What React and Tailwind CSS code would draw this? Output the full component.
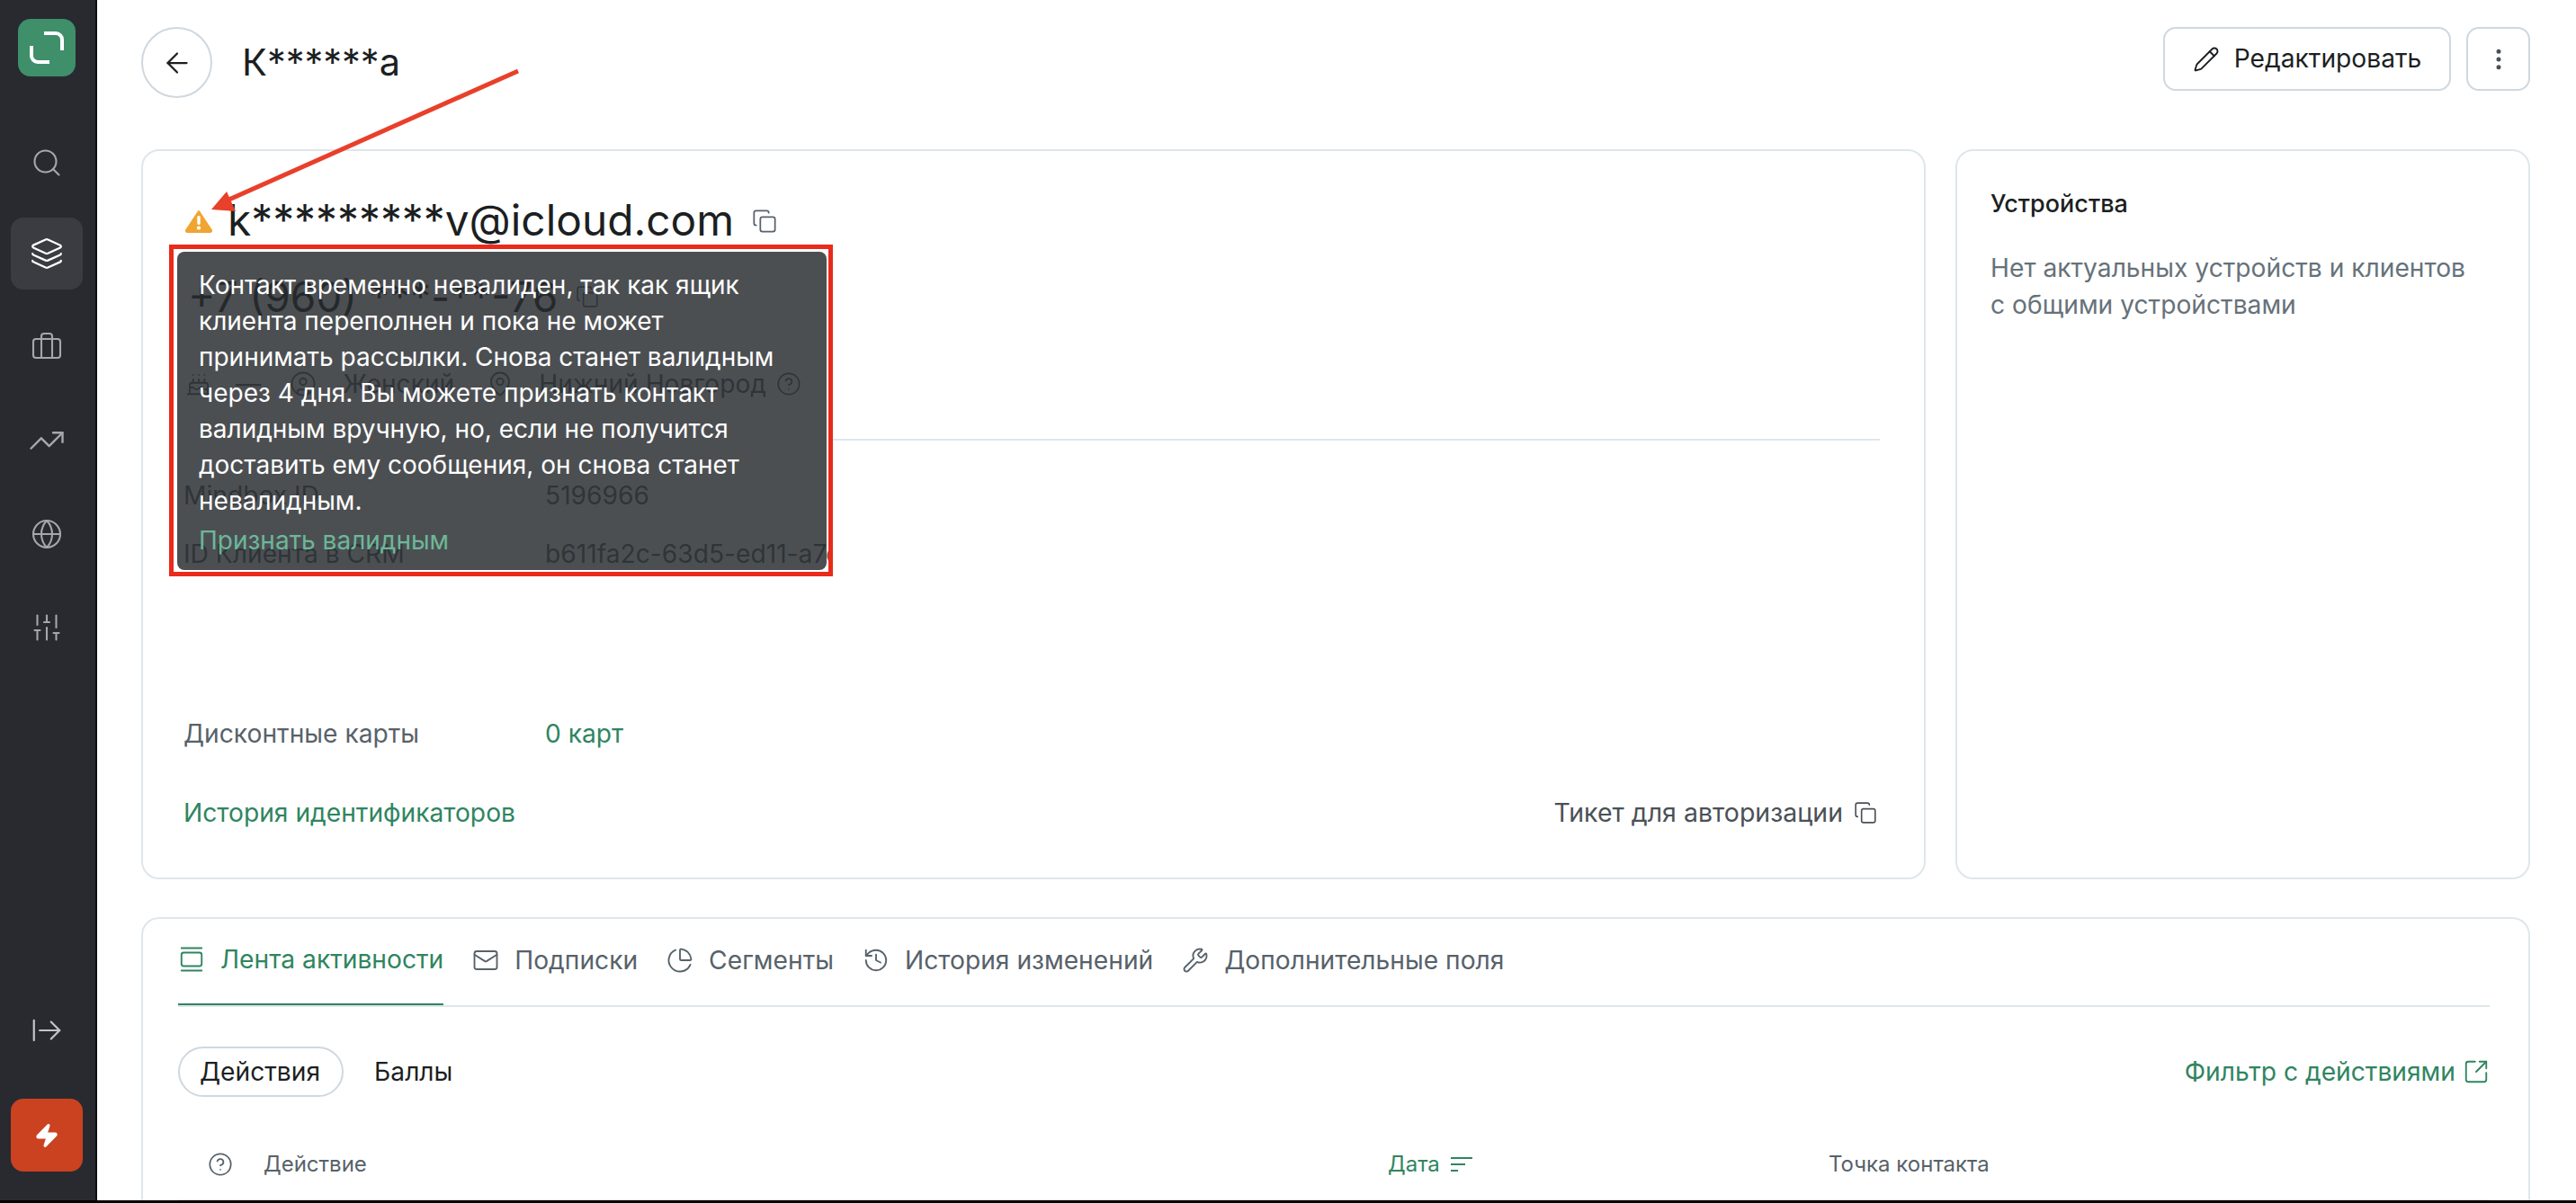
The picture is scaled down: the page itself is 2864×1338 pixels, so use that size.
import {
  ArrowLeft, ArrowRightFromLine, Briefcase, Cake, ChartPie, CircleHelp, CircleUser, Copy, EllipsisVertical,
  GalleryVertical, Globe, History, Layers, Mail, MapPin, Pencil, Search, SlidersVertical, SquareArrowOutUpRight,
  TrendingUp, Wrench, Zap,
} from "lucide-react";

const Logo = () => (
  <div className="w-[64px] h-[64px] rounded-[14px] bg-[#3f8f6b] flex items-center justify-center">
    <svg width="38" height="38" viewBox="0 0 38 38" fill="none" stroke="white" strokeWidth="4">
      <path d="M16 3H29a7 7 0 0 1 7 7V22" />
      <path d="M2 17V28a7 7 0 0 0 7 7H22" />
    </svg>
  </div>
);

const WarnIcon = () => (
  <svg width="32" height="26" viewBox="0 0 30 26" preserveAspectRatio="none" className="shrink-0">
    <path d="M15 2 L28 23 a1.5 1.5 0 0 1 -1 2 H3 a1.5 1.5 0 0 1 -1 -2 Z" fill="#f0a532" stroke="#f0a532" strokeWidth="2" strokeLinejoin="round" />
    <rect x="13.4" y="7" width="3.2" height="10" rx="1.4" fill="white" />
    <circle cx="15" cy="20.5" r="2" fill="white" />
  </svg>
);

const SortIcon = () => (
  <svg width="24" height="20" viewBox="0 0 24 20" fill="none" stroke="#2f8560" strokeWidth="2">
    <path d="M0 3H24M0 10H16M0 17H8" />
  </svg>
);

const NavItem = ({ icon: Icon, active, size = 36 }) => (
  <div className={`w-[80px] h-[80px] rounded-[14px] flex items-center justify-center ${active ? "bg-[#3a3c42]" : ""}`}>
    <Icon size={size} strokeWidth={1.4} className={active ? "text-white" : "text-[#a5a7aa]"} />
  </div>
);

const Tab = ({ icon: Icon, label, active }) => (
  <div className={`h-[96px] pb-[4px] flex items-center gap-[17px] ${active ? "border-b-2 border-[#2f8560] text-[#2f8560]" : "text-[#57626a]"}`}>
    <Icon size={30} strokeWidth={1.5} />
    <span>{label}</span>
  </div>
);

export default function App() {
  return (
    <div className="h-[1338px] w-full overflow-hidden relative flex border-b-[3px] border-black bg-white text-[28.2px] text-[#1c1f22] font-['Inter',sans-serif]">
      <aside className="w-[108px] shrink-0 bg-[#282a30] border-r-2 border-[#0e0f11] flex flex-col items-center pt-[21px] pb-[32px] pr-[2px]">
        <Logo />
        <div className="mt-[56px] mb-[21px]"><NavItem icon={Search} /></div>
        <div className="flex flex-col gap-6">
          <NavItem icon={Layers} active size={38} />
          <NavItem icon={Briefcase} />
          <NavItem icon={TrendingUp} size={42} />
          <NavItem icon={Globe} />
          <NavItem icon={SlidersVertical} />
        </div>
        <div className="mt-auto mb-[57px]">
          <ArrowRightFromLine size={38} strokeWidth={1.4} className="text-[#c3c5c7]" />
        </div>
        <div className="w-[80px] h-[81px] rounded-[14px] bg-[#cb4221] flex items-center justify-center">
          <Zap size={28} fill="white" stroke="white" />
        </div>
      </aside>

      <main className="flex-1 pl-[49px] pr-[51px] pt-[30px] flex flex-col min-w-0">
        <header className="h-[79px] flex items-center">
          <button className="w-[79px] h-[79px] rounded-full border-2 border-[#cfd8df] flex items-center justify-center">
            <ArrowLeft size={36} strokeWidth={1.5} />
          </button>
          <h1 className="ml-[33px] text-[41.5px] font-normal">К******а</h1>
          <button className="ml-auto h-[71px] w-[320px] -mt-[8px] rounded-[14px] border-2 border-[#cfd8df] flex items-center justify-center gap-[16px]">
            <Pencil size={30} strokeWidth={1.5} />
            <span>Редактировать</span>
          </button>
          <button className="ml-[17px] h-[71px] w-[71px] -mt-[8px] rounded-[14px] border-2 border-[#cfd8df] flex items-center justify-center">
            <EllipsisVertical size={30} strokeWidth={2} className="text-[#4a5157]" />
          </button>
        </header>

        <div className="mt-[57px] flex gap-[33px]">
          <section className="relative w-[1984px] h-[812px] rounded-[20px] border-2 border-[#dfe6eb] pl-[45px] pr-[52px] pt-[48px]">
            <div className="h-[60px] flex items-center ml-[1px]">
              <WarnIcon />
              <span className="ml-[16px] text-[47.8px] leading-none">k*********v@icloud.com</span>
              <Copy size={28} strokeWidth={1.5} className="ml-[20px] text-[#57626a]" />
            </div>

            <div className="mt-[30px] h-[48px] flex items-center gap-[20px] text-[46px] ml-[5px]">
              <span>+7 (960) ***-**-76</span>
              <Copy size={26} strokeWidth={1.5} className="text-[#57626a]" />
            </div>

            <div className="mt-[53px] h-[40px] w-[718px] overflow-hidden whitespace-nowrap flex items-center text-[#57626a]">
              <Cake size={30} strokeWidth={1.5} className="ml-[2px] shrink-0" />
              <span className="ml-[26px]">—</span>
              <CircleUser size={30} strokeWidth={1.5} className="ml-[32px] shrink-0" />
              <span className="ml-[29px]">Женский</span>
              <MapPin size={30} strokeWidth={1.5} className="ml-[36px] shrink-0" />
              <span className="ml-[28px]">Нижний Новгород</span>
              <CircleHelp size={28} strokeWidth={1.5} className="ml-[11px] shrink-0" />
              <span className="ml-[34px]">Спам</span>
            </div>

            <div className="mt-[41px] ml-[722px] -mr-[3px] border-t-2 border-[#dfe6eb]" />

            <div className="mt-[41px] h-[40px] flex items-center">
              <span className="w-[402px] text-[#57626a]">Mindbox ID</span>
              <span className="text-[#57626a]">5196966</span>
            </div>
            <div className="mt-[25px] h-[40px] flex items-center">
              <span className="w-[402px] text-[#57626a]">ID Клиента в CRM</span>
              <span className="w-[315px] overflow-hidden whitespace-nowrap text-[#57626a]">b611fa2c-63d5-ed11-a7c6-0050</span>
            </div>

            <div className="mt-[160px] h-[40px] flex items-center">
              <span className="w-[402px] text-[#57626a]">Дисконтные карты</span>
              <span className="text-[#2f8560]">0 карт</span>
            </div>
            <div className="mt-[48px] h-[40px] flex items-center justify-between">
              <span className="text-[#2f8560]">История идентификаторов</span>
              <span className="flex items-center gap-[12px] text-[28.5px] text-[#4a5157]">
                Тикет для авторизации
                <Copy size={26} strokeWidth={1.5} />
              </span>
            </div>

            {/* red frame from the annotation, tooltip inside it */}
            <div className="absolute left-[29px] top-[104px] w-[738px] h-[369px] border-[5px] border-[#ea2a1b] pl-[4px] pr-[2px] pt-[3px] pb-[2px]">
              <div className="h-full rounded-[8px] bg-[#282b2f]/83 px-[24px] pt-[17px] text-[28px] text-white leading-[40px] whitespace-nowrap">
                <p>Контакт временно невалиден, так как ящик</p>
                <p>клиента переполнен и пока не может</p>
                <p>принимать рассылки. Снова станет валидным</p>
                <p>через 4 дня. Вы можете признать контакт</p>
                <p>валидным вручную, но, если не получится</p>
                <p>доставить ему сообщения, он снова станет</p>
                <p>невалидным.</p>
                <p className="mt-[4px] text-[#6cb79a]">Признать валидным</p>
              </div>
            </div>
          </section>

          <section className="flex-1 h-[812px] rounded-[20px] border-2 border-[#dfe6eb] px-[37px] pt-[39px]">
            <h2 className="font-medium text-[27px] leading-[40px]">Устройства</h2>
            <p className="mt-[31px] leading-[41px] text-[#66727a]">
              Нет актуальных устройств и клиентов
              <br />
              с общими устройствами
            </p>
          </section>
        </div>

        <section className="mt-[42px] flex-1 rounded-t-[20px] border-2 border-b-0 border-[#dfe6eb] pl-[39px] pr-[43px]">
          <nav className="flex gap-[32px] border-b-2 border-[#dfe6eb] h-[98px] items-start">
            <Tab icon={GalleryVertical} label="Лента активности" active />
            <Tab icon={Mail} label="Подписки" />
            <Tab icon={ChartPie} label="Сегменты" />
            <Tab icon={History} label="История изменений" />
            <Tab icon={Wrench} label="Дополнительные поля" />
          </nav>

          <div className="mt-[44px] flex items-center">
            <span className="h-[56px] pl-[22px] pr-[24px] rounded-full border-2 border-[#cfd8df] flex items-center">Действия</span>
            <span className="ml-[34px]">Баллы</span>
            <span className="ml-auto flex items-center gap-[8px] text-[#2f8560]">
              Фильтр с действиями
              <SquareArrowOutUpRight size={30} strokeWidth={1.5} />
            </span>
          </div>

          <div className="mt-[45px] h-[71px] pb-[9px] flex items-center border-b-2 border-[#dfe6eb] text-[24px] text-[#57626a]">
            <CircleHelp size={28} strokeWidth={1.5} className="ml-[33px]" />
            <span className="ml-[34px] w-[1250px]">Действие</span>
            <span className="w-[490px] flex items-center gap-[12px] text-[#2f8560]">
              Дата
              <SortIcon />
            </span>
            <span>Точка контакта</span>
          </div>
        </section>
      </main>

      {/* annotation arrow */}
      <svg className="absolute left-0 top-0 pointer-events-none" width="700" height="300" viewBox="0 0 700 300">
        <path d="M576 79 L250 224" stroke="#e8402a" strokeWidth="5" />
        <path d="M235 233 L252 213 L262 235 Z" fill="#e8402a" />
      </svg>
    </div>
  );
}
